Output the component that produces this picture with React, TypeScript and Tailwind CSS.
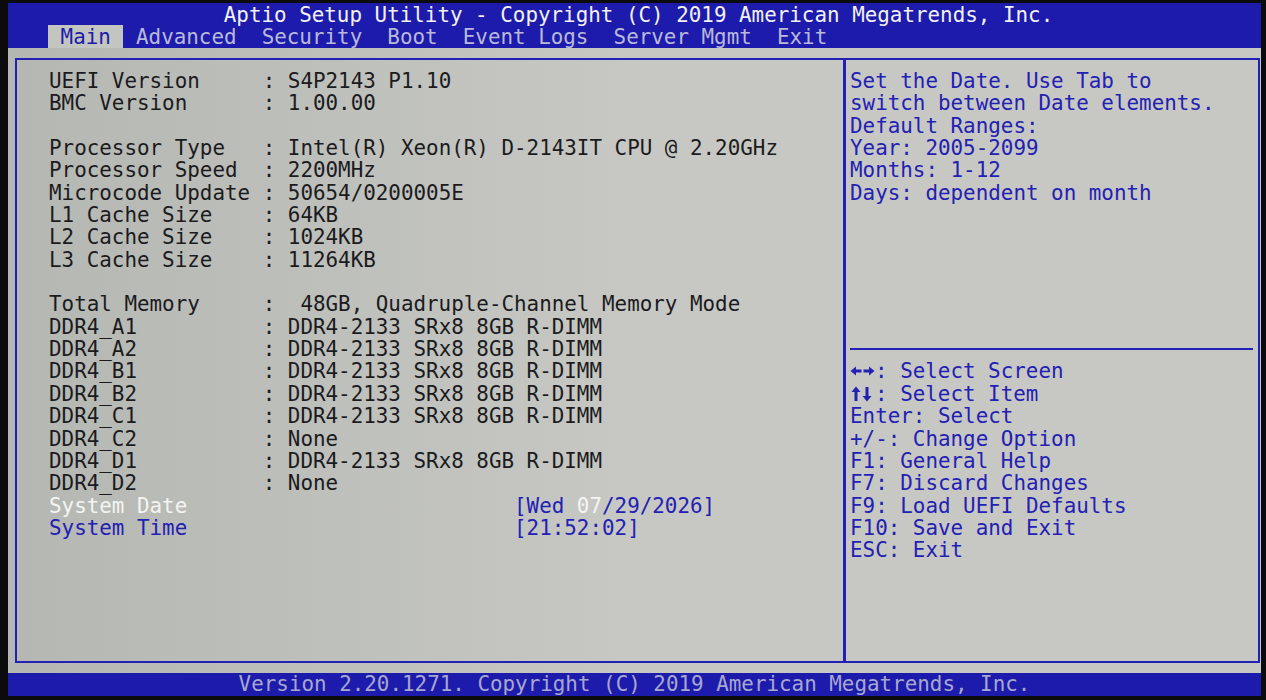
const mono = { fontFamily: '"DejaVu Sans Mono", "Liberation Mono", monospace' };

type Row = { label: string; value?: string; wide?: boolean };

const info: (Row | null)[] = [
  { label: "UEFI Version", value: "S4P2143 P1.10" },
  { label: "BMC Version", value: "1.00.00" },
  null,
  { label: "Processor Type", value: "Intel(R) Xeon(R) D-2143IT CPU @ 2.20GHz" },
  { label: "Processor Speed", value: "2200MHz" },
  { label: "Microcode Update", value: "50654/0200005E" },
  { label: "L1 Cache Size", value: "64KB" },
  { label: "L2 Cache Size", value: "1024KB" },
  { label: "L3 Cache Size", value: "11264KB" },
  null,
  { label: "Total Memory", value: "48GB, Quadruple-Channel Memory Mode", wide: true },
  { label: "DDR4_A1", value: "DDR4-2133 SRx8 8GB R-DIMM" },
  { label: "DDR4_A2", value: "DDR4-2133 SRx8 8GB R-DIMM" },
  { label: "DDR4_B1", value: "DDR4-2133 SRx8 8GB R-DIMM" },
  { label: "DDR4_B2", value: "DDR4-2133 SRx8 8GB R-DIMM" },
  { label: "DDR4_C1", value: "DDR4-2133 SRx8 8GB R-DIMM" },
  { label: "DDR4_C2", value: "None" },
  { label: "DDR4_D1", value: "DDR4-2133 SRx8 8GB R-DIMM" },
  { label: "DDR4_D2", value: "None" },
];

const help = [
  "Set the Date. Use Tab to",
  "switch between Date elements.",
  "Default Ranges:",
  "Year: 2005-2099",
  "Months: 1-12",
  "Days: dependent on month",
];

const keys = [
  "Enter: Select",
  "+/-: Change Option",
  "F1: General Help",
  "F7: Discard Changes",
  "F9: Load UEFI Defaults",
  "F10: Save and Exit",
  "ESC: Exit",
];

// chunky bitmap-style arrows, two character cells wide
function LeftRight() {
  return (
    <svg width="25" height="22" viewBox="0 0 25 22" className="inline-block align-top" fill="currentColor">
      <rect x="4" y="9.5" width="7.5" height="3" />
      <path d="M0.5 11 L6 6.5 L6 15.5 Z" />
      <rect x="13.5" y="9.5" width="7.5" height="3" />
      <path d="M24.5 11 L19 6.5 L19 15.5 Z" />
    </svg>
  );
}

function UpDown() {
  return (
    <svg width="25" height="22" viewBox="0 0 25 22" className="inline-block align-top" fill="currentColor">
      <rect x="4.5" y="8" width="3" height="10" />
      <path d="M6 3.5 L1.5 9 L10.5 9 Z" />
      <rect x="15.5" y="4" width="3" height="10" />
      <path d="M17 18.5 L12.5 13 L21.5 13 Z" />
    </svg>
  );
}

function InfoRow({ row }: { row: Row | null }) {
  if (!row) return <div>&nbsp;</div>;
  return (
    <div>
      {row.label.padEnd(17, " ")}
      {":"}
      {row.wide ? "  " : " "}
      {row.value}
    </div>
  );
}

export default function App() {
  return (
    <div
      className="w-[1266px] h-[700px] bg-[#0b0b0d] pt-[3px] pb-[4px] pl-[8px] pr-[5px] flex flex-col text-[20.88px] leading-[22.35px] whitespace-pre overflow-hidden"
      style={mono}
    >
      {/* title + tab bar */}
      <div className="h-[45px] bg-[#1d1bab] flex flex-col">
        <div className="h-[24px] pt-[1px] pl-[8px] text-center text-[#f2f2f6]">
          Aptio Setup Utility - Copyright (C) 2019 American Megatrends, Inc.
        </div>
        <div className="h-[21px] pl-[40px] leading-[21px] text-[#b9b9dc]">
          <span className="bg-[#c3c5c0] text-[#1d1bab]"> Main </span>
          {" Advanced  Security  Boot  Event Logs  Server Mgmt  Exit"}
        </div>
      </div>

      {/* main panels */}
      <div className="flex-1 bg-linear-to-r from-[#b5b7b2] via-[#c7c8c3] to-[#c7c8c3] pt-[10px] pb-[10px] pl-[7px] pr-[1px] flex flex-col">
        <div className="flex-1 flex border-2 border-[#2320b4]">
          <div className="w-[829px] pl-[32px] pt-[10px] text-[#1b1b1e] border-r-[3px] border-[#2320b4]">
            {info.map((r, i) => (
              <InfoRow key={i} row={r} />
            ))}
            <div>
              <span className="text-[#f4f4f2]">System Date</span>
              {"".padEnd(26, " ")}
              <span className="text-[#2320b4]">
                [Wed <span className="text-[#f4f4f2]">07</span>/29/2026]
              </span>
            </div>
            <div className="text-[#2320b4]">
              System Time{"".padEnd(26, " ")}[21:52:02]
            </div>
          </div>
          <div className="flex-1 pl-[4px] pr-[3px] pt-[10px] text-[#2320b4]">
            {help.map((h) => (
              <div key={h}>{h}</div>
            ))}
            {[0, 1, 2, 3, 4, 5].map((i) => (
              <div key={i}>&nbsp;</div>
            ))}
            <div className="h-[22.35px] flex items-center pr-[2px]">
              <div className="w-full h-[2px] bg-[#2320b4]" />
            </div>
            <div>
              <LeftRight />: Select Screen
            </div>
            <div>
              <UpDown />: Select Item
            </div>
            {keys.map((k) => (
              <div key={k}>{k}</div>
            ))}
          </div>
        </div>
      </div>

      {/* footer */}
      <div className="h-[23px] bg-[#1d1bab] text-center leading-[23px] text-[#a7a7cf]">
        Version 2.20.1271. Copyright (C) 2019 American Megatrends, Inc.
      </div>
    </div>
  );
}
